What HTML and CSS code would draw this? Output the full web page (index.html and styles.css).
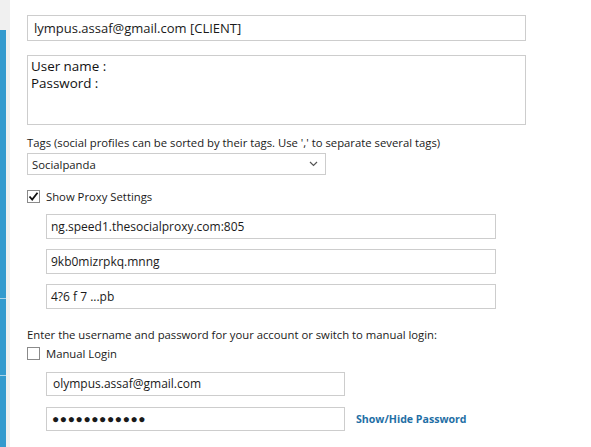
FILE: index.html
```html
<!DOCTYPE html>
<html>
<head>
<meta charset="utf-8">
<link rel="stylesheet" href="styles.css">
</head>
<body>
<div class="page">
  <div class="side">
    <div class="side-top"></div>
    <div class="side-blue seg1"></div>
    <div class="side-blue seg2"></div>
    <div class="side-blue seg3"></div>
  </div>
  <div class="main">
    <div class="field title-field">lympus.assaf@gmail.com [CLIENT]</div>
    <div class="notes">
      <div class="note-line">User name :</div>
      <div class="note-line">Password :</div>
    </div>
    <div class="label tags-label">Tags (social profiles can be sorted by their tags. Use ',' to separate several tags)</div>
    <div class="select">
      <span>Socialpanda</span>
      <svg class="chev" width="9" height="6" viewBox="0 0 9 6"><path d="M1 1 L4.5 4.5 L8 1" fill="none" stroke="#555" stroke-width="1.2"/></svg>
    </div>
    <div class="check-row proxy-check">
      <span class="box"><svg width="11" height="11" viewBox="0 0 11 11"><path d="M1.5 5.5 L4.2 8.5 L9.5 1.8" fill="none" stroke="#111" stroke-width="1.8"/></svg></span>
      <span>Show Proxy Settings</span>
    </div>
    <div class="proxy">
      <div class="field sub">ng.speed1.thesocialproxy.com:805</div>
      <div class="field sub">9kb0mizrpkq.mnng</div>
      <div class="field sub">4?6 f 7 ...pb</div>
    </div>
    <div class="label enter-label">Enter the username and password for your account or switch to manual login:</div>
    <div class="check-row manual-check">
      <span class="box"></span>
      <span>Manual Login</span>
    </div>
    <div class="login">
      <div class="field cred">olympus.assaf@gmail.com</div>
      <div class="pw-row">
        <div class="field cred dots">&#9679;&#9679;&#9679;&#9679;&#9679;&#9679;&#9679;&#9679;&#9679;&#9679;&#9679;&#9679;</div>
        <a class="toggle">Show/Hide Password</a>
      </div>
    </div>
  </div>
</div>
</body>
</html>
```

FILE: styles.css
```css
html, body {
  margin: 0;
  padding: 0;
  background: #ffffff;
}
body {
  font-family: "Open Sans", "Noto Sans", sans-serif;
  font-size: 11.3px;
  color: #1a1a1a;
}
.page {
  display: flex;
  width: 591px;
  height: 447px;
  overflow: hidden;
}
.side {
  width: 10px;
  flex: none;
  background: #f0f0f0;
  display: flex;
  flex-direction: column;
}
.side-top {
  height: 30px;
}
.side-blue {
  width: 6px;
  background: #349ace;
}
.seg1 { height: 268px; }
.seg2 { height: 76px; border-top: 1px solid #a9d3ea; }
.seg3 { flex: 1; border-top: 1px solid #a9d3ea; }
.main {
  flex: 1;
  padding-left: 17px;
  padding-top: 15px;
}
.field {
  box-sizing: border-box;
  border: 1px solid #cdcdcd;
  background: #fff;
  white-space: nowrap;
  overflow: hidden;
}
.title-field {
  width: 499px;
  height: 26px;
  padding: 3px 0 0 6px;
  font-size: 13px;
  line-height: 18px;
}
.notes {
  box-sizing: border-box;
  border: 1px solid #cdcdcd;
  width: 499px;
  height: 70px;
  margin-top: 14px;
  padding: 2px 0 0 3px;
  font-size: 13.4px;
  color: #111;
}
.note-line {
  height: 17px;
  line-height: 17px;
  overflow: hidden;
}
.label {
  line-height: 14px;
}
.tags-label {
  margin-top: 11px;
}
.select {
  box-sizing: border-box;
  width: 299px;
  height: 22px;
  margin-top: 3px;
  border: 1px solid #cdcdcd;
  display: flex;
  align-items: center;
  justify-content: space-between;
  padding: 0 7px 0 4px;
}
.chev {
  display: block;
}
.check-row {
  display: flex;
  align-items: center;
  gap: 6px;
}
.box {
  box-sizing: border-box;
  width: 13px;
  height: 13px;
  border: 1px solid #8a8a8a;
  background: #fff;
  display: flex;
  align-items: center;
  justify-content: center;
}
.proxy-check {
  margin-top: 14px;
}
.proxy {
  padding-left: 19px;
  margin-top: 10px;
  display: flex;
  flex-direction: column;
  gap: 10px;
}
.sub {
  width: 450px;
  height: 25px;
  padding: 0 0 0 4px;
  line-height: 23px;
  font-size: 12px;
}
.enter-label {
  margin-top: 19px;
}
.manual-check {
  margin-top: 4px;
}
.login {
  padding-left: 19px;
  margin-top: 11px;
  display: flex;
  flex-direction: column;
  gap: 11px;
}
.cred {
  width: 299px;
  height: 24px;
  padding: 0 0 0 6px;
  line-height: 22px;
  font-size: 12px;
}
.dots {
  font-size: 12px;
  letter-spacing: 0.6px;
  padding-left: 5px;
}
.pw-row {
  display: flex;
  align-items: center;
  gap: 11px;
}
.toggle {
  font-weight: bold;
  color: #1f6fa5;
  font-size: 10.6px;
}
```
